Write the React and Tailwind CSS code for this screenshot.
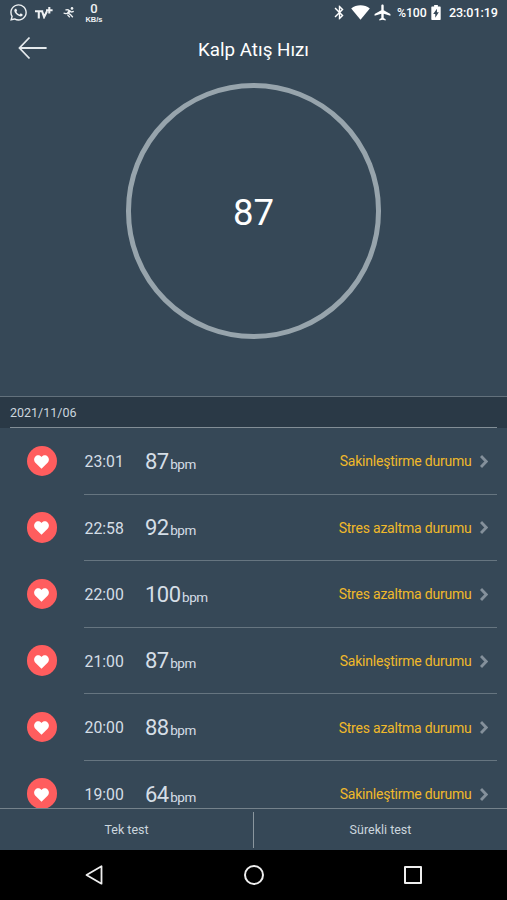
import React from "react";
import { MdBluetooth, MdAirplanemodeActive } from "react-icons/md";
import { FaWhatsapp } from "react-icons/fa";

const rows = [
  { time: "23:01", bpm: 87, state: "Sakinleştirme durumu" },
  { time: "22:58", bpm: 92, state: "Stres azaltma durumu" },
  { time: "22:00", bpm: 100, state: "Stres azaltma durumu" },
  { time: "21:00", bpm: 87, state: "Sakinleştirme durumu" },
  { time: "20:00", bpm: 88, state: "Stres azaltma durumu" },
  { time: "19:00", bpm: 64, state: "Sakinleştirme durumu" },
];

function StatusBar() {
  return (
    <div className="flex h-[25px] shrink-0 items-center text-white">
      <FaWhatsapp className="-mt-px ml-[9px] size-[19px] text-[#eef1f3]" />
      <svg className="ml-[7px] h-[12px] w-[18px] text-[#eef1f3]" viewBox="0 0 18 12" fill="none" stroke="currentColor" strokeWidth="2.1">
        <path d="M0 4.2H8.2M3.8 4.2V11.4M7 4L9.1 10L12 4.2M14.3 0V6.4M11 3.2H17.6" />
      </svg>
      <svg className="ml-[10px] h-[11px] w-[12px] text-[#eef1f3]" viewBox="0 0 12 11" fill="none" stroke="currentColor" strokeWidth="1.3">
        <circle cx="9" cy="1.4" r="1.3" fill="currentColor" stroke="none" />
        <path d="M2.4 2.8L5 2.7L7 4.4L8.6 5L10.8 4.4M5 6L7.4 7.6L9.8 10.2M4.8 6.4L2.8 6.6L.6 6.2M4.4 7.6L6.8 10.2" />
        <path d="M7.2 3.4L4.8 6.3" strokeWidth="2.2" />
      </svg>
      <div className="ml-[9px] flex w-[20px] flex-col items-center text-[#eef1f3]">
        <span className="text-[13px] font-medium leading-[13px]">0</span>
        <span className="font-['Liberation_Sans',sans-serif] text-[7.5px] font-bold leading-[9px]">KB/s</span>
      </div>
      <div className="ml-auto flex items-center">
        <MdBluetooth className="size-[17px]" />
        <svg className="ml-[3px] h-[15px] w-[19px]" viewBox="0 0 19 15" fill="currentColor">
          <path d="M9.5 14.8L.2 3.5C5.4-.7 13.6-.7 18.8 3.5Z" />
        </svg>
        <MdAirplanemodeActive className="ml-[3px] size-[19px]" />
        <span className="ml-[5px] w-[30px] whitespace-nowrap pt-px text-[12.3px] font-medium tracking-[-0.1px]">%100</span>
        <svg className="ml-[4px] h-[15px] w-[10px]" viewBox="0 0 10 16">
          <path fill="currentColor" fillRule="evenodd" d="M3 0H7V1.5H9.3Q10 1.5 10 2.3V15.2Q10 16 9.2 16H.8Q0 16 0 15.2V2.3Q0 1.5.7 1.5H3ZM6 4L2 9.5H4.2V13.5L8 7.7H6Z" />
        </svg>
        <span className="ml-[8px] mr-[8px] w-[50px] whitespace-nowrap pt-px text-[12.6px] font-medium tracking-[-0.1px]">23:01:19</span>
      </div>
    </div>
  );
}

function ReadingRow({ time, bpm, state }) {
  return (
    <div className="flex h-[66.6px] shrink-0 pl-[26.5px] pr-[10.5px]">
      <div className="mt-[17.5px] flex size-[30.5px] shrink-0 items-center justify-center rounded-full bg-[#ff5d5e]">
        <svg className="mt-[2px] h-[14px] w-[15px]" viewBox="0 0 15 14" fill="white">
          <path d="M7.5 13.7L1.4 7.8C-.3 6-.3 3.2 1.2 1.7C3-.2 6-.1 7.5 2C9-.1 12-.2 13.8 1.7C15.3 3.2 15.3 6 13.6 7.8Z" />
        </svg>
      </div>
      <div className="ml-[27px] flex flex-1 items-center border-b border-[#667580] pt-[2px] text-[#d5dee6]">
        <span className="w-[61px] pl-[0.5px] text-[15.8px]">{time}</span>
        <span className="flex items-baseline pt-px">
          <span className="text-[22px] leading-none tracking-[-0.5px]">{bpm}</span>
          <span className="ml-[1.5px] text-[13.5px] tracking-[-0.5px]">bpm</span>
        </span>
        <span className="ml-auto text-[14px] tracking-[-0.22px] text-[#f0b92a]">{state}</span>
        <svg className="-mt-px ml-[8.5px] mr-[8.5px] h-[13px] w-[8px]" viewBox="0 0 8 13" fill="none" stroke="#84909b" strokeWidth="2.8">
          <path d="M1 1L6.2 6.5L1 12" />
        </svg>
      </div>
    </div>
  );
}

export default function App() {
  return (
    <div className="flex h-[900px] w-[507px] flex-col overflow-hidden bg-[#364857] font-[Roboto,sans-serif]">
      <StatusBar />
      <header className="grid h-[48px] shrink-0 grid-cols-[60px_1fr_60px] items-center">
        <svg className="-mt-[2px] ml-[18px] h-[24px] w-[30px]" viewBox="0 0 30 24" fill="none" stroke="#e4e9ec" strokeWidth="1.8">
          <path d="M11.5 1.5L1.5 12L11.5 22.5M1.5 12H28.6" />
        </svg>
        <h1 className="pt-[2px] text-center text-[18.8px] text-white">Kalp Atış Hızı</h1>
      </header>
      <section className="flex h-[323px] shrink-0 justify-center pt-[10px]">
        <div className="flex size-[255.5px] items-center justify-center rounded-full border-5 border-[#97a4ac] pt-[5px] text-[36.5px] text-white">
          87
        </div>
      </section>
      <div className="flex h-[32px] shrink-0 flex-col border-t border-[#63717c] bg-[#2a3946] px-[10px]">
        <div className="flex flex-1 items-center border-b border-[#828e96] pt-[2px] text-[12.5px] text-[#ccd6de]">2021/11/06</div>
      </div>
      <main className="flex h-[380px] shrink-0 flex-col overflow-hidden">
        {rows.map((row) => (
          <ReadingRow key={row.time} {...row} />
        ))}
      </main>
      <footer className="flex h-[42px] shrink-0 items-center border-t border-[#75828b] text-[12.5px] text-[#ccd6de]">
        <button className="flex-1 pt-px">Tek test</button>
        <div className="h-[36px] w-px bg-[#8a969e]" />
        <button className="flex-1 pt-px">Sürekli test</button>
      </footer>
      <nav className="flex h-[50px] shrink-0 items-center justify-between bg-black pl-[85px] pr-[84px]">
        <svg className="h-[20px] w-[18px]" viewBox="0 0 18 20" fill="none" stroke="#eee" strokeWidth="1.8" strokeLinejoin="round">
          <path d="M16.5 1.3V18.7L1.5 10Z" />
        </svg>
        <div className="size-[20px] rounded-full border-2 border-[#eee]" />
        <div className="mr-px size-[18px] rounded-[1px] border-2 border-[#eee]" />
      </nav>
    </div>
  );
}
